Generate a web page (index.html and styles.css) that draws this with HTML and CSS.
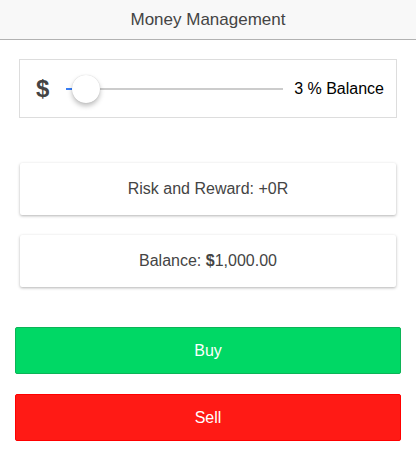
FILE: index.html
```html
<!doctype html>
<html lang="en">
    <head>
        <meta charset="UTF-8" />
        <meta name="viewport" content="width=device-width, initial-scale=1.0" />
        <title>Money Management</title>
        <link rel="stylesheet" href="styles.css">
    </head>
    <body>
        <header class="bar">
            <h1 class="bar-title">Money Management</h1>
        </header>

        <main class="content">
            <div class="range-item">
                <span class="range-icon">$</span>
                <div class="range">
                    <div class="range-track">
                        <div class="range-fill" style="width: 3%"></div>
                    </div>
                    <div class="range-knob" style="left: 3%"></div>
                </div>
                <span class="range-label">3 % Balance</span>
            </div>

            <div class="card card-first"><span>Risk and Reward: +0R</span></div>
            <div class="card"><span>Balance: <b>$</b>1,000.00</span></div>

            <button class="btn btn-buy">Buy</button>
            <button class="btn btn-sell">Sell</button>
        </main>
    </body>
</html>
```

FILE: styles.css
```css
body {
    margin: 0;
    font-family: "Liberation Sans", Arial, sans-serif;
    background: #fff;
    color: #444;
}
.bar {
    height: 39px;
    background: #f8f8f8;
    border-bottom: 1px solid #b2b2b2;
    display: flex;
    align-items: center;
    justify-content: center;
}
.bar-title {
    margin: 0;
    font-size: 17px;
    font-weight: 500;
    color: #444;
}
.content {
    padding: 19px 15px 0;
    display: flex;
    flex-direction: column;
}

/* slider row */
.range-item {
    margin: 0 4px;
    height: 57px;
    border: 1px solid #ddd;
    display: flex;
    align-items: center;
    padding: 0 12px 0 16px;
}
.range-icon {
    font-size: 24px;
    font-weight: bold;
    color: #444;
    width: 16px;
}
.range {
    flex: 1;
    position: relative;
    margin: 0 11px 0 14px;
    height: 28px;
    display: flex;
    align-items: center;
}
.range-track {
    width: 100%;
    height: 2px;
    background: #ccc;
}
.range-fill {
    height: 2px;
    background: #387ef5;
}
.range-knob {
    position: absolute;
    top: 0;
    width: 28px;
    height: 28px;
    margin-left: -1px;
    border-radius: 50%;
    background: #fff;
    box-shadow: 0 3px 5px rgba(0, 0, 0, 0.25), 0 0 1px rgba(0, 0, 0, 0.2);
}
.range-label {
    font-size: 16px;
    color: #000;
}

/* info cards */
.card {
    margin: 20px 5px 0;
    height: 52px;
    display: flex;
    align-items: center;
    justify-content: center;
    background: #fff;
    border-radius: 2px;
    box-shadow: 0 1px 3px rgba(0, 0, 0, 0.3);
    font-size: 16px;
    color: #444;
}
.card-first {
    margin-top: 45px;
}

/* buttons */
.btn {
    height: 47px;
    border-radius: 2px;
    font-family: inherit;
    font-size: 16px;
    color: #fff;
    cursor: pointer;
}
.btn-buy {
    margin-top: 40px;
    background: #00d865;
    border: 1px solid #0cb457;
}
.btn-sell {
    margin-top: 20px;
    background: #ff1a15;
    border: 1px solid #f00;
}
```
